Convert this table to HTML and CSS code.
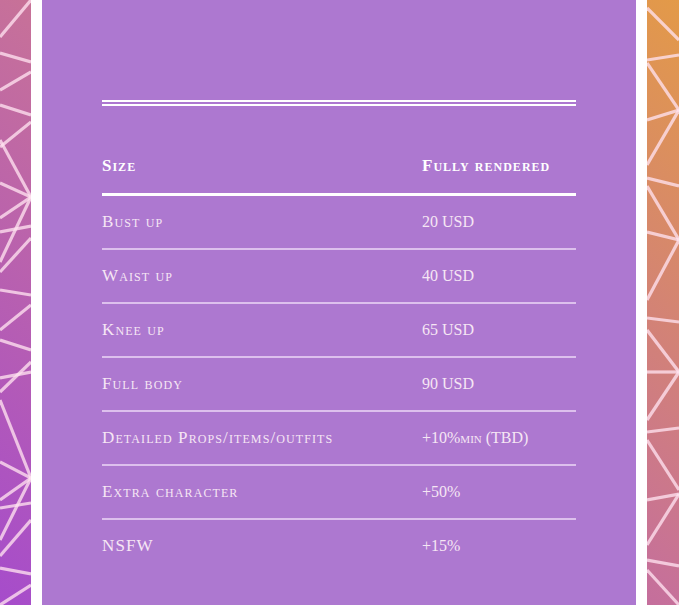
FILE: index.html
```html
<!DOCTYPE html>
<html lang="en">
<head>
<meta charset="utf-8">
<title>Prices</title>
<link rel="stylesheet" href="styles.css">
</head>
<body>
<div class="page">
  <div class="side side-left">
    <svg class="mesh" width="31" height="605" viewBox="0 0 31 605" preserveAspectRatio="none">
      <g>
        <line x1="31" y1="0" x2="0" y2="37"/>
        <line x1="0" y1="53" x2="31" y2="62"/>
        <line x1="31" y1="72" x2="0" y2="90"/>
        <line x1="0" y1="105" x2="31" y2="115"/>
        <line x1="31" y1="122" x2="0" y2="147"/>
        <line x1="0" y1="140" x2="31" y2="197"/>
        <line x1="0" y1="183" x2="31" y2="197"/>
        <line x1="31" y1="197" x2="0" y2="218"/>
        <line x1="31" y1="197" x2="0" y2="262"/>
        <line x1="0" y1="232" x2="31" y2="226"/>
        <line x1="31" y1="238" x2="0" y2="272"/>
        <line x1="0" y1="290" x2="31" y2="295"/>
        <line x1="31" y1="305" x2="0" y2="330"/>
        <line x1="0" y1="340" x2="31" y2="350"/>
        <line x1="31" y1="362" x2="0" y2="392"/>
        <line x1="0" y1="378" x2="31" y2="372"/>
        <line x1="0" y1="400" x2="31" y2="478"/>
        <line x1="0" y1="462" x2="31" y2="478"/>
        <line x1="31" y1="478" x2="0" y2="500"/>
        <line x1="31" y1="478" x2="0" y2="540"/>
        <line x1="0" y1="508" x2="31" y2="503"/>
        <line x1="31" y1="520" x2="0" y2="556"/>
        <line x1="0" y1="568" x2="31" y2="574"/>
        <line x1="31" y1="585" x2="0" y2="605"/>
      </g>
    </svg>
  </div>

  <main class="panel">
    <div class="rule-double"></div>
    <table class="prices">
      <thead>
        <tr>
          <th class="col-size">Size</th>
          <th class="col-price">Fully rendered</th>
        </tr>
      </thead>
      <tbody>
        <tr><td>Bust up</td><td class="price">20 USD</td></tr>
        <tr><td>Waist up</td><td class="price">40 USD</td></tr>
        <tr><td>Knee up</td><td class="price">65 USD</td></tr>
        <tr><td>Full body</td><td class="price">90 USD</td></tr>
        <tr><td>Detailed Props/items/outfits</td><td class="price">+10%min (TBD)</td></tr>
        <tr><td>Extra character</td><td class="price">+50%</td></tr>
        <tr><td>NSFW</td><td class="price">+15%</td></tr>
      </tbody>
    </table>
  </main>

  <div class="side side-right">
    <svg class="mesh" width="32" height="605" viewBox="0 0 32 605" preserveAspectRatio="none">
      <g>
        <line x1="0" y1="8" x2="32" y2="40"/>
        <line x1="0" y1="60" x2="32" y2="55"/>
        <line x1="0" y1="63" x2="32" y2="110"/>
        <line x1="0" y1="120" x2="32" y2="110"/>
        <line x1="32" y1="110" x2="0" y2="165"/>
        <line x1="0" y1="178" x2="32" y2="186"/>
        <line x1="0" y1="186" x2="32" y2="240"/>
        <line x1="0" y1="232" x2="32" y2="240"/>
        <line x1="32" y1="240" x2="0" y2="300"/>
        <line x1="0" y1="318" x2="32" y2="322"/>
        <line x1="0" y1="330" x2="32" y2="372"/>
        <line x1="0" y1="372" x2="32" y2="372"/>
        <line x1="32" y1="372" x2="0" y2="420"/>
        <line x1="0" y1="432" x2="32" y2="428"/>
        <line x1="0" y1="440" x2="32" y2="490"/>
        <line x1="0" y1="500" x2="32" y2="494"/>
        <line x1="32" y1="494" x2="0" y2="545"/>
        <line x1="0" y1="560" x2="32" y2="566"/>
        <line x1="0" y1="570" x2="32" y2="605"/>
      </g>
    </svg>
  </div>
</div>
</body>
</html>
```
FILE: styles.css
```css
html, body {
  margin: 0;
  padding: 0;
}

body {
  width: 679px;
  height: 605px;
  overflow: hidden;
  background: linear-gradient(to top right, #a64ccb 0%, #c6709a 50%, #e39a48 100%);
  font-family: "Liberation Serif", "DejaVu Serif", serif;
}

.page {
  display: grid;
  grid-template-columns: 31px 616px 32px;
  height: 605px;
}

.side {
  height: 605px;
  overflow: hidden;
}

.mesh {
  display: block;
}

.mesh line {
  stroke: rgba(255, 225, 240, 0.78);
  stroke-width: 3.2;
}

.panel {
  background: #ad78d0;
  border-left: 11px solid #ffffff;
  border-right: 11px solid #ffffff;
  padding: 100px 60px 0;
  box-sizing: border-box;
  height: 605px;
}

.rule-double {
  border-top: 6px double #ffffff;
  height: 0;
}

.prices {
  width: 100%;
  border-collapse: collapse;
  margin-top: 32px;
  font-variant: small-caps;
  color: #f6e6f4;
  font-size: 17px;
  letter-spacing: 1.1px;
}

.prices th {
  text-align: left;
  font-weight: bold;
  color: #ffffff;
  height: 55px;
  padding: 0;
  border-bottom: 3px solid #ffffff;
  vertical-align: middle;
  letter-spacing: 1px;
}

.prices .col-size {
  width: 320px;
}

.prices td {
  height: 52px;
  padding: 0;
  vertical-align: middle;
  border-bottom: 2px solid rgba(232, 210, 244, 0.8);
}

.prices td.price {
  font-size: 16px;
  letter-spacing: 0;
}

.prices tbody tr:last-child td {
  border-bottom: none;
}
```
